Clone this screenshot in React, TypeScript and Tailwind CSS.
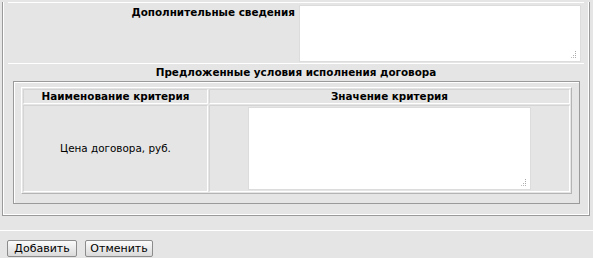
function Grip() {
  return (
    <svg className="pointer-events-none absolute right-[4px] bottom-[4px]" width="6" height="7" viewBox="0 0 6 7">
      <rect x="4" y="0" width="1" height="1" fill="#a8a8a8" />
      <rect x="4" y="2" width="1" height="1" fill="#a8a8a8" />
      <rect x="2" y="4" width="1" height="1" fill="#b0b0b0" />
      <rect x="4" y="4" width="1" height="1" fill="#a8a8a8" />
      <rect x="0" y="6" width="1" height="1" fill="#c0c0c0" />
      <rect x="2" y="6" width="1" height="1" fill="#b8b8b8" />
      <rect x="4" y="6" width="1" height="1" fill="#b0b0b0" />
    </svg>
  );
}

function Area({ className }: { className: string }) {
  return (
    <div className={"relative " + className}>
      <textarea className="block h-full w-full resize-none border border-[#dcdcdc] bg-white outline-none" />
      <Grip />
    </div>
  );
}

const cell = "flex items-center justify-center border border-t-[#d4d4d4] border-l-[#d4d4d4] border-r-white border-b-white";

export default function App() {
  return (
    <div className="h-[258px] w-[593px] overflow-hidden bg-[#e5e5e5] font-['DejaVu_Sans',sans-serif] text-[10.4px] leading-[13px] text-black">
      {/* outer panel */}
      <div className="ml-[2px] h-[214px] w-[588px] border-x border-b border-[#9a9a9a] px-[5px] shadow-[inset_1px_0_0_#fff,inset_-1px_0_0_#fff,inset_0_-1px_0_#fff]">
        <div className="mt-[2px] flex border-t border-white">
          <div className="flex-1 pt-[3px] pr-[4px] text-right font-bold">Дополнительные сведения</div>
          <Area className="mt-[2px] mr-[3px] mb-[1px] h-[57px] w-[282px]" />
        </div>

        <div className="border-t border-white pt-[2px]">
          <div className="text-center font-bold">Предложенные условия исполнения договора</div>
          <div className="mt-[2px] mr-[4px] ml-[5px] h-[123px] border border-[#9a9a9a] pt-[5px] pr-[7px] pl-[7px] shadow-[inset_1px_1px_0_#fff]">
            <div className="flex h-[107px] flex-col gap-[1px] border border-t-white border-l-white border-r-[#b4b4b4] border-b-[#b4b4b4] p-[1px]">
              <div className="flex h-[15px] gap-[1px]">
                <div className={cell + " w-[185px] font-bold"}>Наименование критерия</div>
                <div className={cell + " flex-1 font-bold"}>Значение критерия</div>
              </div>
              <div className="flex flex-1 gap-[1px]">
                <div className={cell + " w-[185px]"}>Цена договора, руб.</div>
                <div className={cell + " flex-1"}>
                  <Area className="h-[83px] w-[283px]" />
                </div>
              </div>
            </div>
          </div>
        </div>
      </div>

      <div className="mt-[14px] border-t border-white pt-[9px] pl-[7px]">
        <div className="flex gap-[8px]">
          <button className="h-[17px] w-[70px] rounded-[2px] border border-[#8c8c8c] bg-gradient-to-b from-[#fbfbfb] to-[#dadada] text-[11px] leading-[15px]">
            Добавить
          </button>
          <button className="h-[17px] w-[68px] rounded-[2px] border border-[#8c8c8c] bg-gradient-to-b from-[#fbfbfb] to-[#dadada] text-[11px] leading-[15px]">
            Отменить
          </button>
        </div>
      </div>
    </div>
  );
}
